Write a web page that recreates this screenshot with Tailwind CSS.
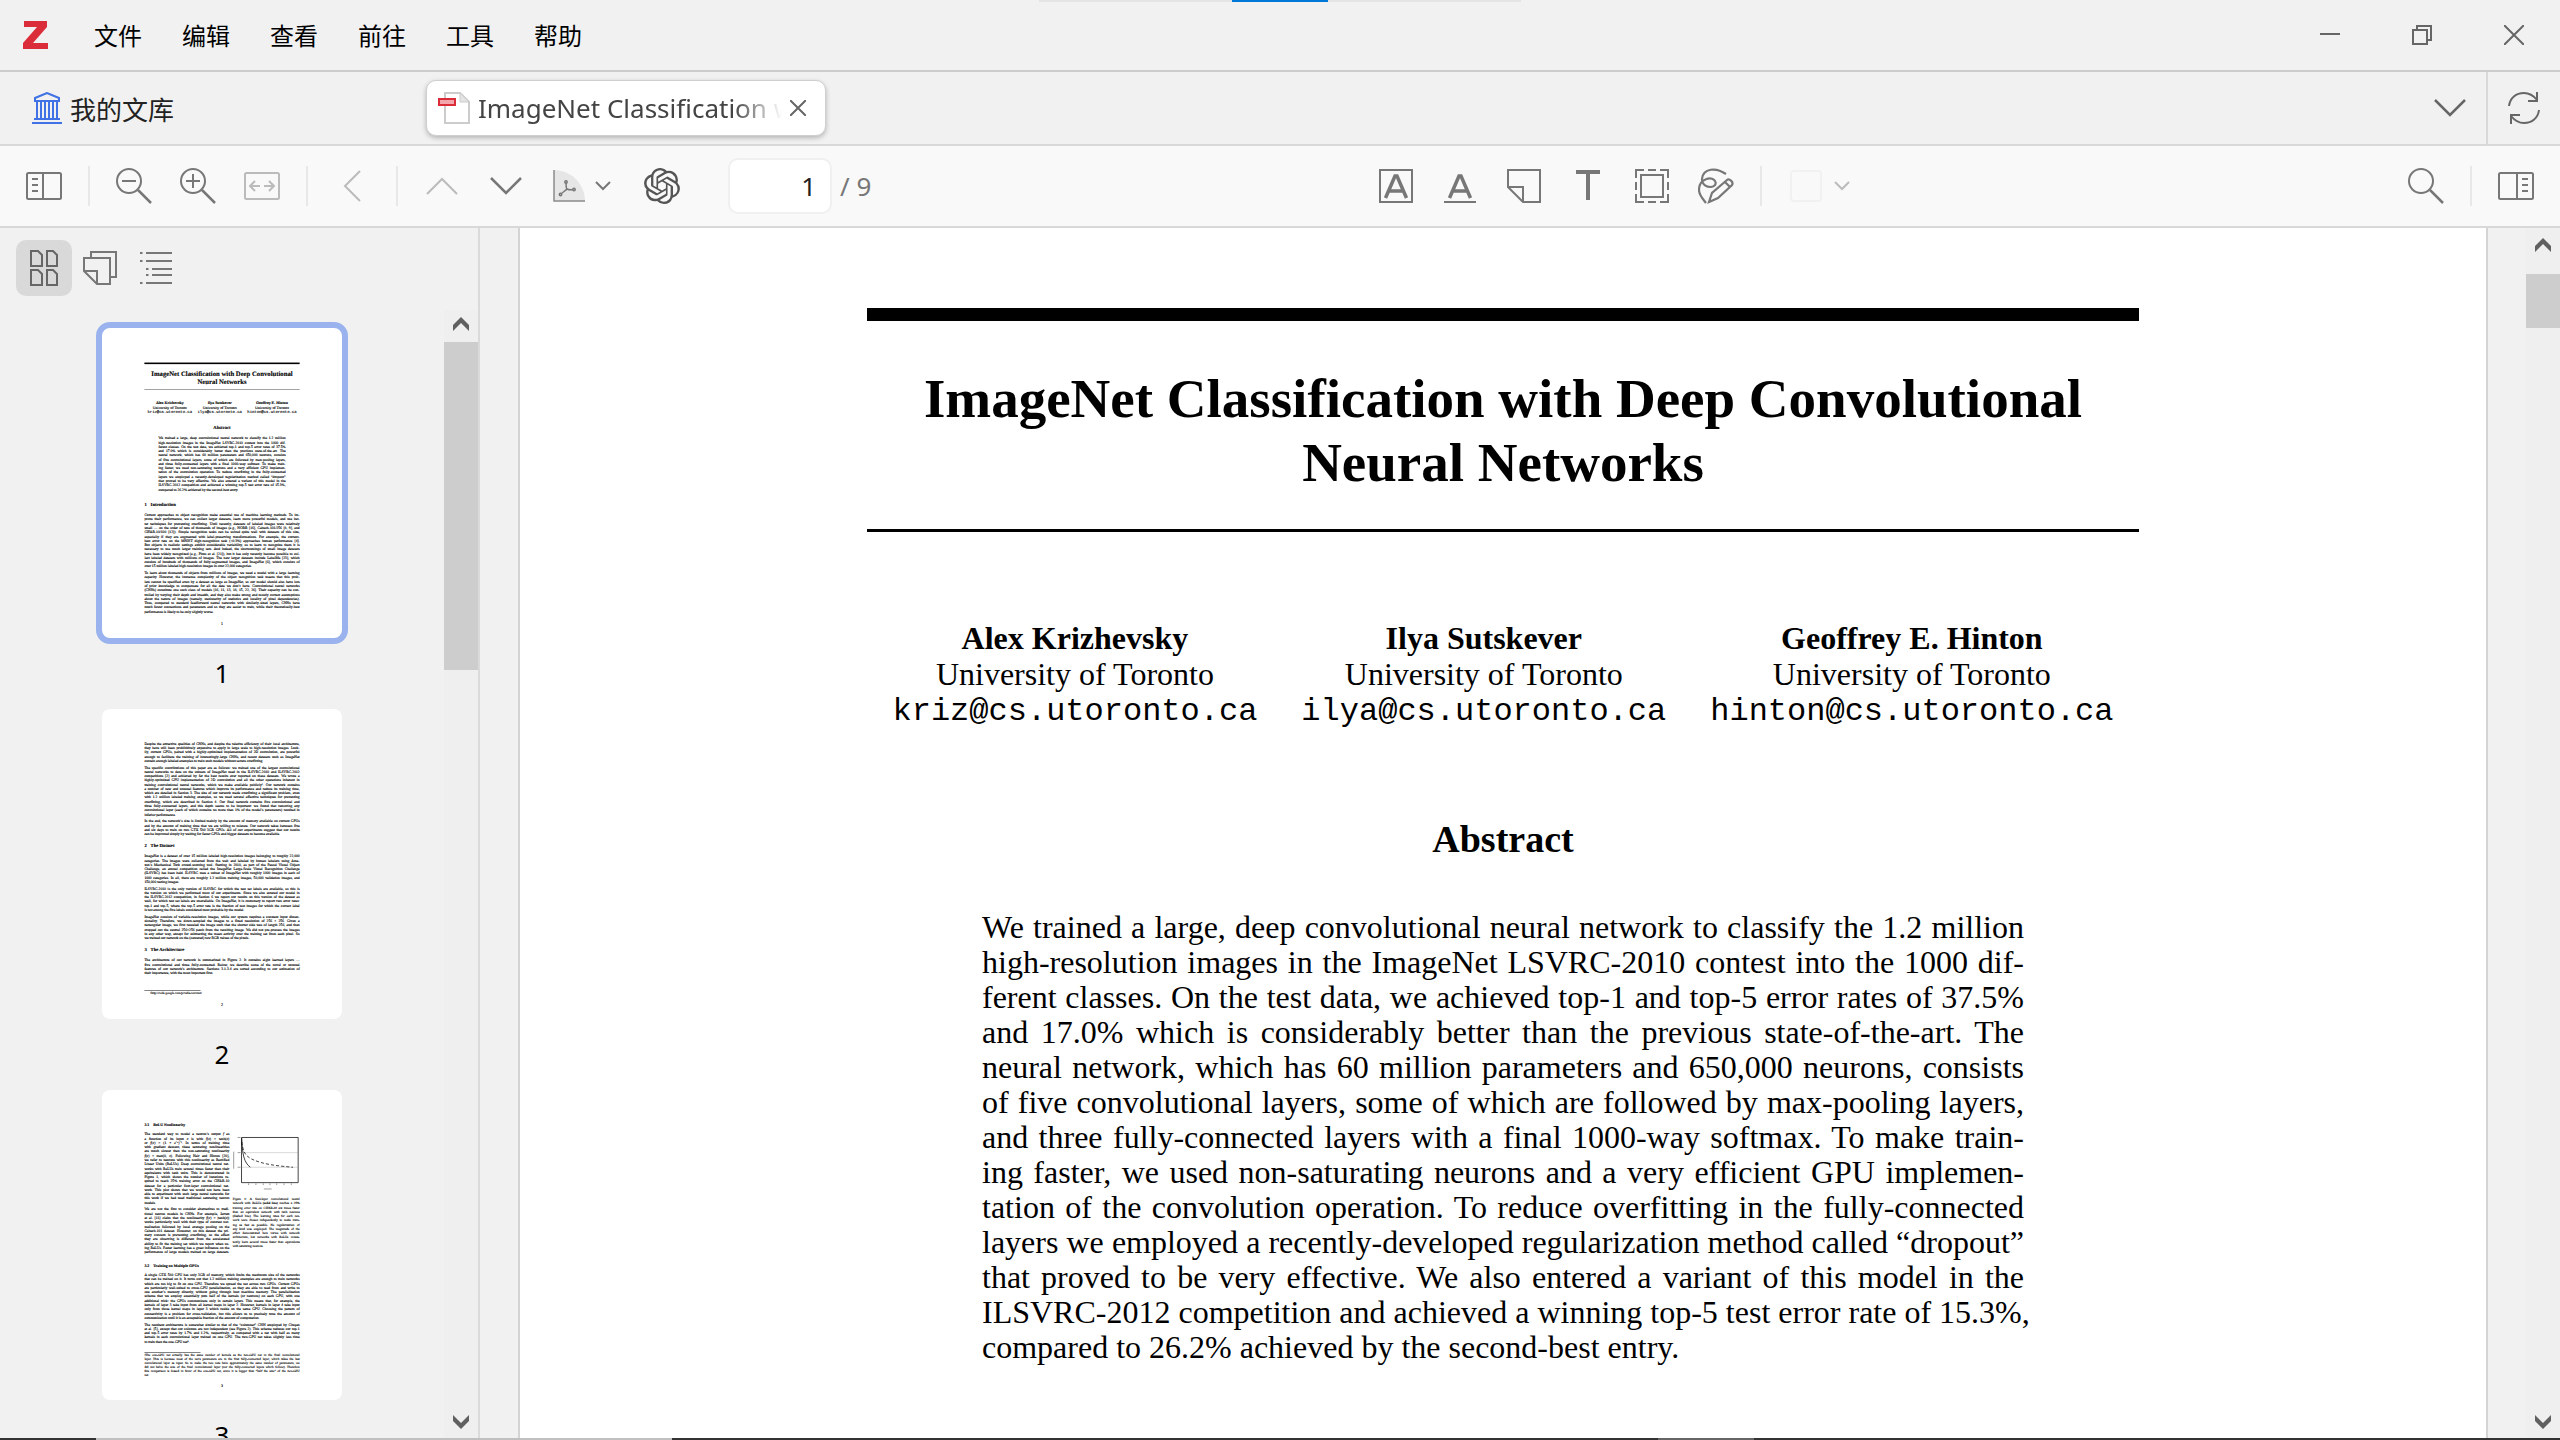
<!DOCTYPE html>
<html lang="zh-CN">
<head>
<meta charset="utf-8">
<title>ImageNet Classification - Zotero</title>
<script src="https://cdn.jsdelivr.net/npm/@tailwindcss/browser@4"></script>
</head>
<body class="relative flex h-screen flex-col overflow-hidden bg-[#f1f1f1] font-['Noto_Sans','Noto_Sans_CJK_SC',sans-serif] text-[#222]">

<!-- Screen-share handle at the top edge -->
<div class="absolute left-1/2 top-0 flex h-0.5 w-[482px] -translate-x-1/2 justify-center bg-[#e4e4e4]"><div class="w-24 bg-[#0078d7]"></div></div>

<!-- Title bar -->
<header class="flex h-[72px] shrink-0 items-center border-b-2 border-[#cccccc]">
  <svg class="ml-[23px] h-7 w-[25px]" viewBox="0 0 25 28" aria-label="Zotero"><path d="M1 0h23v6L10 22h15v6H0v-6L14 6H1z" fill="#db2c3a"/></svg>
  <nav class="ml-[46px] flex gap-10 font-['Noto_Sans_CJK_SC',sans-serif] text-2xl text-black">
    <button>文件</button><button>编辑</button><button>查看</button><button>前往</button><button>工具</button><button>帮助</button>
  </nav>
  <div class="ml-auto flex h-full text-[#666]">
    <button class="grid w-[92px] place-items-center" aria-label="最小化"><svg class="size-5" viewBox="0 0 20 20"><path d="M0 9h20" stroke="currentColor" stroke-width="2"/></svg></button>
    <button class="grid w-[92px] place-items-center" aria-label="还原"><svg class="size-5" viewBox="0 0 20 20" fill="none" stroke="currentColor" stroke-width="2"><path d="M1 5h14v14H1z M5 5V1h14v14h-4"/></svg></button>
    <button class="grid w-[92px] place-items-center" aria-label="关闭"><svg class="size-5" viewBox="0 0 20 20"><path d="M0 0l20 20M20 0L0 20" stroke="currentColor" stroke-width="2"/></svg></button>
  </div>
</header>

<!-- Tab bar -->
<div class="flex h-[74px] shrink-0 items-center border-b-2 border-[#d8d8d8]">
  <button class="ml-8 flex w-[394px] items-center gap-2 text-left font-['Noto_Sans_CJK_SC',sans-serif] text-[26px]">
    <svg class="h-8 w-[30px]" viewBox="0 0 30 32" fill="none" stroke="#4072e5" stroke-width="2"><path d="M3 9V6l12-5 12 5v3z M5 9v17M9 9v17M13 9v17M17 9v17M21 9v17M25 9v17M2 27h26M0 31h30"/></svg>
    我的文库
  </button>
  <div class="flex h-14 w-[400px] items-center rounded-[10px] border border-[#cfcfcf] bg-white pl-[11px] shadow-[0_2px_5px_rgba(0,0,0,0.25)]">
    <svg class="size-8 shrink-0" viewBox="0 0 32 32" fill="none"><path d="M7 1h15l9 9v21H7z" fill="#fff" stroke="#ccc" stroke-width="2"/><path d="M22 1v9h9z" fill="#e4e4e4" stroke="#ccc" stroke-width="1"/><path d="M1 7h16v6H1z" fill="#f4a6ad" stroke="#db2c3a" stroke-width="2"/></svg>
    <span class="ml-2 w-[304px] overflow-hidden whitespace-nowrap text-[26px] text-[#444] [mask-image:linear-gradient(to_right,black_84%,transparent)]">ImageNet Classification with Deep</span>
    <button class="ml-2 text-[#666]" aria-label="关闭标签页"><svg class="size-4" viewBox="0 0 16 16"><path d="M0 0l16 16M16 0L0 16" stroke="currentColor" stroke-width="2"/></svg></button>
  </div>
  <button class="ml-auto mr-5 text-[#666]" aria-label="所有标签页"><svg class="h-[18px] w-8" viewBox="0 0 32 18" fill="none"><path d="M1 1l15 15L31 1" stroke="currentColor" stroke-width="2.5"/></svg></button>
  <div class="flex h-full w-[74px] items-center justify-center border-l-2 border-[#d8d8d8]">
    <button class="text-[#666]" aria-label="同步"><svg class="size-8" viewBox="0 0 32 32" fill="none" stroke="currentColor" stroke-width="2"><path d="M1 14C2 6 8 1 16 1c5 0 9 2 13 7M29 0v9H20M31 18c-1 8-7 13-15 13-5 0-9-2-13-7M3 32v-9h9"/></svg></button>
  </div>
</div>

<!-- Reader toolbar -->
<div class="flex h-[82px] shrink-0 items-center justify-between border-b-2 border-[#d8d8d8] bg-[#f9f9f9] text-[#777]">
  <div class="flex items-center pl-3">
    <button class="grid size-16 place-items-center" aria-label="侧边栏"><svg class="h-7 w-9" viewBox="0 0 36 28" fill="none" stroke="currentColor" stroke-width="2"><rect x="1" y="1" width="34" height="26" rx="1.5"/><path d="M17 1v26M6 7h6M6 13h6M6 19h6"/></svg></button>
    <span class="mx-3 h-10 w-0.5 bg-[#e8e8e8]"></span>
    <button class="grid size-16 place-items-center" aria-label="缩小"><svg class="size-9" viewBox="0 0 36 36" fill="none" stroke="currentColor" stroke-width="2"><circle cx="13" cy="13" r="12"/><path d="M22 22l13 13" stroke-width="2.5"/><path d="M6 13h14"/></svg></button>
    <button class="grid size-16 place-items-center" aria-label="放大"><svg class="size-9" viewBox="0 0 36 36" fill="none" stroke="currentColor" stroke-width="2"><circle cx="13" cy="13" r="12"/><path d="M22 22l13 13" stroke-width="2.5"/><path d="M6 13h14M13 6v14"/></svg></button>
    <button class="grid size-16 place-items-center text-[#bbb]" aria-label="适合宽度"><svg class="h-7 w-9" viewBox="0 0 36 28" fill="none" stroke="currentColor" stroke-width="2"><rect x="1" y="1" width="34" height="26" rx="1.5"/><path d="M16 14H6M11 9l-5 5 5 5M20 14h10M25 9l5 5-5 5"/></svg></button>
    <span class="mx-3 h-10 w-0.5 bg-[#e8e8e8]"></span>
    <button class="grid size-16 place-items-center text-[#bbb]" aria-label="后退"><svg class="h-8 w-[18px]" viewBox="0 0 18 32" fill="none"><path d="M17 1L2 16l15 15" stroke="currentColor" stroke-width="2"/></svg></button>
    <span class="mx-3 h-10 w-0.5 bg-[#e8e8e8]"></span>
    <button class="grid size-16 place-items-center text-[#bbb]" aria-label="上一页"><svg class="h-[18px] w-8" viewBox="0 0 32 18" fill="none"><path d="M1 17L16 2l15 15" stroke="currentColor" stroke-width="2"/></svg></button>
    <button class="grid size-16 place-items-center" aria-label="下一页"><svg class="h-[18px] w-8" viewBox="0 0 32 18" fill="none"><path d="M1 1l15 15L31 1" stroke="currentColor" stroke-width="2.5"/></svg></button>
    <button class="flex h-16 w-[88px] items-center justify-center gap-2.5" aria-label="PDF"><svg class="size-8" viewBox="0 0 32 32" fill="none"><path d="M1 0c17 0 31 14 31 31H1z" fill="#e6e6e6"/><path d="M1 0v31h31" stroke="#8a8a8a" stroke-width="1.5"/><g stroke="#777" stroke-width="1.5" stroke-linejoin="round"><path d="M13 13c0 4 0 5 1 7M14 19c-2 2-4 3-6 5M14 19c2 1 4 1 6 .5"/><circle cx="13" cy="12" r="1.200"/><circle cx="7.500" cy="24.500" r="1.200"/><circle cx="21" cy="19.500" r="1.200"/></g></svg><svg class="h-2.5 w-4" viewBox="0 0 16 10" fill="none"><path d="M1 1l7 7 7-7" stroke="currentColor" stroke-width="2"/></svg></button>
    <button class="ml-1 grid size-16 place-items-center text-[#555]" aria-label="GPT"><svg class="size-9" viewBox="0 0 24 24" fill="currentColor"><path d="M22.2819 9.8211a5.9847 5.9847 0 0 0-.5157-4.9108 6.0462 6.0462 0 0 0-6.5098-2.9A6.0651 6.0651 0 0 0 4.9807 4.1818a5.9847 5.9847 0 0 0-3.9977 2.9 6.0462 6.0462 0 0 0 .7427 7.0966 5.98 5.98 0 0 0 .511 4.9107 6.051 6.051 0 0 0 6.5146 2.9001A5.9847 5.9847 0 0 0 13.2599 24a6.0557 6.0557 0 0 0 5.7718-4.2058 5.9894 5.9894 0 0 0 3.9977-2.9001 6.0557 6.0557 0 0 0-.7475-7.0729zm-9.022 12.6081a4.4755 4.4755 0 0 1-2.8764-1.0408l.1419-.0804 4.7783-2.7582a.7948.7948 0 0 0 .3927-.6813v-6.7369l2.02 1.1686a.071.071 0 0 1 .038.052v5.5826a4.504 4.504 0 0 1-4.4945 4.4944zm-9.6607-4.1254a4.4708 4.4708 0 0 1-.5346-3.0137l.142.0852 4.783 2.7582a.7712.7712 0 0 0 .7806 0l5.8428-3.3685v2.3324a.0804.0804 0 0 1-.0332.0615L9.74 19.9502a4.4992 4.4992 0 0 1-6.1408-1.6464zM2.3408 7.8956a4.485 4.485 0 0 1 2.3655-1.9728V11.6a.7664.7664 0 0 0 .3879.6765l5.8144 3.3543-2.0201 1.1685a.0757.0757 0 0 1-.071 0l-4.8303-2.7865A4.504 4.504 0 0 1 2.3408 7.872zm16.5963 3.8558L13.1038 8.364 15.1192 7.2a.0757.0757 0 0 1 .071 0l4.8303 2.7913a4.4944 4.4944 0 0 1-.6765 8.1042v-5.6772a.79.79 0 0 0-.407-.667zm2.0107-3.0231l-.142-.0852-4.7735-2.7818a.7759.7759 0 0 0-.7854 0L9.409 9.2297V6.8974a.0662.0662 0 0 1 .0284-.0615l4.8303-2.7866a4.4992 4.4992 0 0 1 6.6802 4.66zM8.3065 12.863l-2.02-1.1638a.0804.0804 0 0 1-.038-.0567V6.0742a4.4992 4.4992 0 0 1 7.3757-3.4537l-.142.0805L8.704 5.459a.7948.7948 0 0 0-.3927.6813zm1.0976-2.3654l2.602-1.4998 2.6069 1.4998v2.9994l-2.5974 1.4997-2.6067-1.4997Z"/></svg></button>
    <input class="ml-[34px] h-14 w-[104px] rounded-[10px] border-2 border-[#f0f0f0] bg-white pr-3.5 text-right text-[26px] text-[#222]" value="1" aria-label="页码">
    <span class="ml-2 text-[26px]">/ 9</span>
  </div>

  <div class="flex items-center pr-[52px]">
    <button class="grid size-16 place-items-center" aria-label="高亮"><svg class="size-[34px]" viewBox="0 0 34 34" fill="none" stroke="currentColor"><rect x="1" y="1" width="32" height="32" stroke-width="2"/><path d="M6.500 29L16 7h2l9.500 22M10 22h14" stroke-width="3.500"/></svg></button>
    <button class="grid size-16 place-items-center" aria-label="下划线"><svg class="size-[34px]" viewBox="0 0 34 34" fill="none" stroke="currentColor"><path d="M1 33h32" stroke-width="2"/><path d="M6.500 29L16 7h2l9.500 22M10 22h14" stroke-width="3.500"/></svg></button>
    <button class="grid size-16 place-items-center" aria-label="便笺"><svg class="size-[34px]" viewBox="0 0 34 34" fill="none" stroke="currentColor" stroke-width="2"><path d="M1 1h32v32H16L1 18zM1 18h15v15"/></svg></button>
    <button class="grid size-16 place-items-center" aria-label="文本"><svg class="size-[34px]" viewBox="0 0 34 34" fill="none" stroke="currentColor" stroke-width="4"><path d="M5 3h24M17 3v28"/></svg></button>
    <button class="grid size-16 place-items-center" aria-label="选择区域"><svg class="size-[34px]" viewBox="0 0 34 34" fill="none" stroke="currentColor" stroke-width="2"><rect x="6" y="6" width="22" height="22"/><path d="M1 9V1h8M13 1h8M25 1h8v8M33 13v8M33 25v8h-8M21 33h-8M9 33H1v-8M1 21v-8"/></svg></button>
    <button class="grid size-16 place-items-center" aria-label="绘制"><svg class="size-9" viewBox="0 0 36 36" fill="none" stroke="currentColor" stroke-width="2.200"><path d="M28 6C18-1 5 0 4 11c0 6 5 8 9 8 4-.5 5-3 4.500-5-1-3-5-4.500-9-3C3 13 1 17 1 22c0 5 3 8 7 13"/><path d="M11 34l3-9 15-13c2-2 7 2 5 5L20 30zM27 14l5 5"/></svg></button>
    <span class="mx-3 h-10 w-0.5 bg-[#e8e8e8]"></span>
    <button class="ml-4 flex items-center gap-3 text-[#bbb]" aria-label="颜色"><span class="size-8 rounded border-2 border-[#f1f1f1]"></span><svg class="h-2.5 w-4" viewBox="0 0 16 10" fill="none"><path d="M1 1l7 7 7-7" stroke="currentColor" stroke-width="2"/></svg></button>
  </div>

  <div class="flex items-center pr-3">
    <button class="grid size-16 place-items-center" aria-label="查找"><svg class="size-9" viewBox="0 0 36 36" fill="none" stroke="currentColor" stroke-width="2"><circle cx="13" cy="13" r="12"/><path d="M22 22l13 13" stroke-width="2.500"/></svg></button>
    <span class="mx-3 h-10 w-0.5 bg-[#e8e8e8]"></span>
    <button class="grid size-16 place-items-center" aria-label="信息面板"><svg class="h-7 w-9" viewBox="0 0 36 28" fill="none" stroke="currentColor" stroke-width="2"><rect x="1" y="1" width="34" height="26" rx="1.500"/><path d="M19 1v26M24 7h6M24 13h6M24 19h6"/></svg></button>
  </div>
</div>

<div class="flex min-h-0 flex-1">
  <!-- Sidebar -->
  <aside class="flex w-[480px] shrink-0 flex-col border-r-2 border-[#dadada]">
    <div class="flex h-[82px] shrink-0 pl-4 pt-3 text-[#777]">
      <button class="grid size-14 place-items-center rounded-[10px] bg-[#d9d9d9] text-[#666]" aria-label="缩略图"><svg class="h-9 w-7" viewBox="0 0 28 36" fill="none" stroke="currentColor" stroke-width="2"><path d="M1 1h7l4 4v11H1zM17 1h6l4 4v11H17zM1 20h7l4 4v11H1zM17 20h6l4 4v11H17z"/></svg></button>
      <button class="grid size-14 place-items-center" aria-label="注释"><svg class="size-[34px]" viewBox="0 0 34 34" fill="none" stroke="currentColor" stroke-width="2"><path d="M8 7V1h25v25h-6M1 7h26v26H14L1 20zM1 20h13v13"/></svg></button>
      <button class="grid size-14 place-items-center" aria-label="大纲"><svg class="size-8" viewBox="0 0 32 32" fill="none" stroke="currentColor" stroke-width="2"><path d="M0 1h2.500M6 1h26M0 9h2.500M6 9h26M6 17h2.500M12 17h20M6 23h2.500M12 23h20M0 31h2.500M6 31h26"/></svg></button>
    </div>
    <div class="flex min-h-0 flex-1">
      <div class="flex flex-1 flex-col items-center overflow-hidden pt-3 text-[26px] leading-[71px] text-black">

        <!-- Thumbnails: full-size pages drawn into a small view box -->
        <button class="-mb-1.5 shrink-0 rounded-[14px] border-6 border-[#9ab3ee] bg-white">
          <svg class="h-[310px] w-60" viewBox="0 0 1966 2540"><foreignObject width="1966" height="2540">
            <div class="flex h-full flex-col px-[347px] pb-24 pt-[283px] text-left font-['Liberation_Serif',serif] text-[32px] leading-[35px] text-black [-webkit-text-stroke:1px_black] [text-rendering:geometricPrecision] [&_h3]:mb-[47px] [&_h3]:flex [&_h3]:gap-8 [&_h3]:text-[38px] [&_h3]:font-bold [&_h3]:leading-10 [&>p]:mb-[20px] [&_p]:whitespace-pre-line [&_p]:text-[30px] [&_p]:[text-align-last:justify] [&_p>span]:block [&_p>span:last-child]:[text-align-last:left]">
              <div id="front-copy"></div>
              <h3 class="mt-[88px]"><span>1</span><span>Introduction</span></h3>
              <p>Current approaches to object recognition make essential use of machine learning methods. To im-
prove their performance, we can collect larger datasets, learn more powerful models, and use bet-
ter techniques for preventing overfitting. Until recently, datasets of labeled images were relatively
small — on the order of tens of thousands of images (e.g., NORB [16], Caltech-101/256 [8, 9], and
CIFAR-10/100 [12]). Simple recognition tasks can be solved quite well with datasets of this size,
especially if they are augmented with label-preserving transformations. For example, the current-
best error rate on the MNIST digit-recognition task (&lt;0.3%) approaches human performance [4].
But objects in realistic settings exhibit considerable variability, so to learn to recognize them it is
necessary to use much larger training sets. And indeed, the shortcomings of small image datasets
have been widely recognized (e.g., Pinto et al. [21]), but it has only recently become possible to col-
lect labeled datasets with millions of images. The new larger datasets include LabelMe [23], which
consists of hundreds of thousands of fully-segmented images, and ImageNet [6], which consists of<span>over 15 million labeled high-resolution images in over 22,000 categories.</span></p>
              <p>To learn about thousands of objects from millions of images, we need a model with a large learning
capacity. However, the immense complexity of the object recognition task means that this prob-
lem cannot be specified even by a dataset as large as ImageNet, so our model should also have lots
of prior knowledge to compensate for all the data we don’t have. Convolutional neural networks
(CNNs) constitute one such class of models [16, 11, 13, 18, 15, 22, 26]. Their capacity can be con-
trolled by varying their depth and breadth, and they also make strong and mostly correct assumptions
about the nature of images (namely, stationarity of statistics and locality of pixel dependencies).
Thus, compared to standard feedforward neural networks with similarly-sized layers, CNNs have
much fewer connections and parameters and so they are easier to train, while their theoretically-best<span>performance is likely to be only slightly worse.</span></p>
              <div class="mt-auto text-center">1</div>
            </div>
          </foreignObject></svg>
        </button>
        <span class="shrink-0">1</span>

        <button class="shrink-0 rounded-lg bg-white">
          <svg class="h-[310px] w-60" viewBox="0 0 1966 2540"><foreignObject width="1966" height="2540">
            <div class="flex h-full flex-col px-[347px] pb-24 pt-[266px] text-left font-['Liberation_Serif',serif] text-[32px] leading-[35px] text-black [-webkit-text-stroke:1px_black] [text-rendering:geometricPrecision] [&_h3]:mb-[47px] [&_h3]:mt-[40px] [&_h3]:flex [&_h3]:gap-8 [&_h3]:text-[38px] [&_h3]:font-bold [&_h3]:leading-10 [&>p]:mb-[20px] [&_p]:whitespace-pre-line [&_p]:text-[30px] [&_p]:[text-align-last:justify] [&_p>span]:block [&_p>span:last-child]:[text-align-last:left]">
              <p>Despite the attractive qualities of CNNs, and despite the relative efficiency of their local architecture,
they have still been prohibitively expensive to apply in large scale to high-resolution images. Luck-
ily, current GPUs, paired with a highly-optimized implementation of 2D convolution, are powerful
enough to facilitate the training of interestingly-large CNNs, and recent datasets such as ImageNet<span>contain enough labeled examples to train such models without severe overfitting.</span></p>
              <p>The specific contributions of this paper are as follows: we trained one of the largest convolutional
neural networks to date on the subsets of ImageNet used in the ILSVRC-2010 and ILSVRC-2012
competitions [2] and achieved by far the best results ever reported on these datasets. We wrote a
highly-optimized GPU implementation of 2D convolution and all the other operations inherent in
training convolutional neural networks, which we make available publicly¹. Our network contains
a number of new and unusual features which improve its performance and reduce its training time,
which are detailed in Section 3. The size of our network made overfitting a significant problem, even
with 1.2 million labeled training examples, so we used several effective techniques for preventing
overfitting, which are described in Section 4. Our final network contains five convolutional and
three fully-connected layers, and this depth seems to be important: we found that removing any
convolutional layer (each of which contains no more than 1% of the model’s parameters) resulted in<span>inferior performance.</span></p>
              <p>In the end, the network’s size is limited mainly by the amount of memory available on current GPUs
and by the amount of training time that we are willing to tolerate. Our network takes between five
and six days to train on two GTX 580 3GB GPUs. All of our experiments suggest that our results<span>can be improved simply by waiting for faster GPUs and bigger datasets to become available.</span></p>
              <h3><span>2</span><span>The Dataset</span></h3>
              <p>ImageNet is a dataset of over 15 million labeled high-resolution images belonging to roughly 22,000
categories. The images were collected from the web and labeled by human labelers using Ama-
zon’s Mechanical Turk crowd-sourcing tool. Starting in 2010, as part of the Pascal Visual Object
Challenge, an annual competition called the ImageNet Large-Scale Visual Recognition Challenge
(ILSVRC) has been held. ILSVRC uses a subset of ImageNet with roughly 1000 images in each of
1000 categories. In all, there are roughly 1.2 million training images, 50,000 validation images, and<span>150,000 testing images.</span></p>
              <p>ILSVRC-2010 is the only version of ILSVRC for which the test set labels are available, so this is
the version on which we performed most of our experiments. Since we also entered our model in
the ILSVRC-2012 competition, in Section 6 we report our results on this version of the dataset as
well, for which test set labels are unavailable. On ImageNet, it is customary to report two error rates:
top-1 and top-5, where the top-5 error rate is the fraction of test images for which the correct label<span>is not among the five labels considered most probable by the model.</span></p>
              <p>ImageNet consists of variable-resolution images, while our system requires a constant input dimen-
sionality. Therefore, we down-sampled the images to a fixed resolution of 256 × 256. Given a
rectangular image, we first rescaled the image such that the shorter side was of length 256, and then
cropped out the central 256×256 patch from the resulting image. We did not pre-process the images
in any other way, except for subtracting the mean activity over the training set from each pixel. So<span>we trained our network on the (centered) raw RGB values of the pixels.</span></p>
              <h3><span>3</span><span>The Architecture</span></h3>
              <p>The architecture of our network is summarized in Figure 2. It contains eight learned layers —
five convolutional and three fully-connected. Below, we describe some of the novel or unusual
features of our network’s architecture. Sections 3.1-3.4 are sorted according to our estimation of<span>their importance, with the most important first.</span></p>
              <div class="mt-auto w-[460px] whitespace-nowrap border-t-4 border-black pl-12 pt-1.5 text-[26px] leading-8">¹http://code.google.com/p/cuda-convnet/</div>
              <div class="mt-16 text-center">2</div>
            </div>
          </foreignObject></svg>
        </button>
        <span class="shrink-0">2</span>

        <button class="shrink-0 rounded-lg bg-white">
          <svg class="h-[310px] w-60" viewBox="0 0 1966 2540"><foreignObject width="1966" height="2540">
            <div class="flex h-full flex-col px-[347px] pb-24 pt-[266px] text-left font-['Liberation_Serif',serif] text-[32px] leading-[35px] text-black [-webkit-text-stroke:1px_black] [text-rendering:geometricPrecision] [&_h4]:mb-[44px] [&_h4]:flex [&_h4]:gap-8 [&_h4]:font-bold [&_p]:mb-[20px] [&_p]:whitespace-pre-line [&_p]:text-[30px] [&_p]:[text-align-last:justify] [&_p>span]:block [&_p>span:last-child]:[text-align-last:left]">
              <h4><span>3.1</span><span>ReLU Nonlinearity</span></h4>
              <div class="flex justify-between">
                <div class="w-[696px]">
                  <p>The standard way to model a neuron’s output <i>f</i> as
a function of its input <i>x</i> is with <i>f</i>(<i>x</i>) = tanh(<i>x</i>)
or <i>f</i>(<i>x</i>) = (1 + <i>e</i>⁻ˣ)⁻¹. In terms of training time
with gradient descent, these saturating nonlinearities
are much slower than the non-saturating nonlinearity
<i>f</i>(<i>x</i>) = max(0, <i>x</i>). Following Nair and Hinton [20],
we refer to neurons with this nonlinearity as Rectified
Linear Units (ReLUs). Deep convolutional neural net-
works with ReLUs train several times faster than their
equivalents with tanh units. This is demonstrated in
Figure 1, which shows the number of iterations re-
quired to reach 25% training error on the CIFAR-10
dataset for a particular four-layer convolutional net-
work. This plot shows that we would not have been
able to experiment with such large neural networks for
this work if we had used traditional saturating neuron<span>models.</span></p>
                  <p>We are not the first to consider alternatives to tradi-
tional neuron models in CNNs. For example, Jarrett
et al. [11] claim that the nonlinearity <i>f</i>(<i>x</i>) = |tanh(<i>x</i>)|
works particularly well with their type of contrast nor-
malization followed by local average pooling on the
Caltech-101 dataset. However, on this dataset the pri-
mary concern is preventing overfitting, so the effect
they are observing is different from the accelerated
ability to fit the training set which we report when us-
ing ReLUs. Faster learning has a great influence on the
performance of large models trained on large datasets.</p>
                </div>
                <div class="w-[548px] pt-5 [&_p]:text-[26px]!">
                  <svg class="mb-5 h-[490px] w-[548px]" viewBox="0 0 548 490" fill="none" stroke="#000" stroke-width="6"><path d="M72 24h464v370H72z"/><path d="M72 148h464M72 268h464" stroke="#999" stroke-width="3"/><path d="M74 30c4 130 18 200 70 238"/><path d="M74 60c10 70 20 110 80 140 90 45 220 58 340 68" stroke-dasharray="26 16"/><path d="M40 24h24M40 148h24M40 268h24M130 400v14M190 400v14M250 400v14M305 400v14M360 400v14M420 400v14M480 400v14M8 140v140M255 446h64" stroke="#777"/></svg>
                  <p>Figure 1: A four-layer convolutional neural
network with ReLUs (<b>solid line</b>) reaches a 25%
training error rate on CIFAR-10 six times faster
than an equivalent network with tanh neurons
(dashed line). The learning rates for each net-
work were chosen independently to make train-
ing as fast as possible. No regularization of
any kind was employed. The magnitude of the
effect demonstrated here varies with network
architecture, but networks with ReLUs consis-
tently learn several times faster than equivalents<span>with saturating neurons.</span></p>
                </div>
              </div>
              <h4 class="mt-[54px]"><span>3.2</span><span>Training on Multiple GPUs</span></h4>
              <p>A single GTX 580 GPU has only 3GB of memory, which limits the maximum size of the networks
that can be trained on it. It turns out that 1.2 million training examples are enough to train networks
which are too big to fit on one GPU. Therefore we spread the net across two GPUs. Current GPUs
are particularly well-suited to cross-GPU parallelization, as they are able to read from and write to
one another’s memory directly, without going through host machine memory. The parallelization
scheme that we employ essentially puts half of the kernels (or neurons) on each GPU, with one
additional trick: the GPUs communicate only in certain layers. This means that, for example, the
kernels of layer 3 take input from all kernel maps in layer 2. However, kernels in layer 4 take input
only from those kernel maps in layer 3 which reside on the same GPU. Choosing the pattern of
connectivity is a problem for cross-validation, but this allows us to precisely tune the amount of<span>communication until it is an acceptable fraction of the amount of computation.</span></p>
              <p>The resultant architecture is somewhat similar to that of the “columnar” CNN employed by Cireşan
et al. [5], except that our columns are not independent (see Figure 2). This scheme reduces our top-1
and top-5 error rates by 1.7% and 1.2%, respectively, as compared with a net with half as many
kernels in each convolutional layer trained on one GPU. The two-GPU net takes slightly less time<span>to train than the one-GPU net².</span></p>
              <div class="mt-auto w-[460px] border-t-4 border-black"></div>
              <div class="pt-1.5 leading-8 [&_p]:text-[26px]!"><p>²The one-GPU net actually has the same number of kernels as the two-GPU net in the final convolutional
layer. This is because most of the net’s parameters are in the first fully-connected layer, which takes the last
convolutional layer as input. So to make the two nets have approximately the same number of parameters, we
did not halve the size of the final convolutional layer (nor the fully-connected layers which follow). Therefore
this comparison is biased in favor of the one-GPU net, since it is bigger than “half the size” of the two-GPU<span>net.</span></p></div>
              <div class="mt-10 text-center">3</div>
            </div>
          </foreignObject></svg>
        </button>
        <span class="shrink-0">3</span>
      </div>
      <div class="flex w-[34px] shrink-0 flex-col items-center bg-[#efefef] text-[#606060]">
        <button class="grid h-8 w-full shrink-0 place-items-center pb-1" aria-label="向上滚动"><svg class="h-3.5 w-4" viewBox="0 0 16 14"><path d="M8 0l8 8v6L8 6l-8 8V8z" fill="currentColor"/></svg></button>
        <div class="h-[328px] w-full bg-[#cdcdcd]"></div>
        <button class="mt-auto grid h-8 w-full place-items-center" aria-label="向下滚动"><svg class="h-3.5 w-4" viewBox="0 0 16 14"><path d="M8 14l8-8V0L8 8 0 0v6z" fill="currentColor"/></svg></button>
      </div>
    </div>
  </aside>

  <!-- Document view -->
  <main class="flex min-w-0 flex-1">
    <div class="mx-[38px] flex-1 overflow-hidden border-x-2 border-[#d4d4d4] bg-white">
      <div class="mx-auto mt-20 w-[1272px] font-['Liberation_Serif',serif] text-[32px] leading-[35px] text-black [&_p]:whitespace-pre-line [&_p]:[text-align-last:justify] [&_p>span]:block [&_p>span:last-child]:[text-align-last:left]">
        <div id="front">
          <div class="h-[13px] bg-black"></div>
          <h1 class="mt-[46px] text-center text-[55px] font-bold leading-16">ImageNet Classification with Deep Convolutional<br>Neural Networks</h1>
          <div class="mt-[34px] h-[3px] bg-black"></div>
          <div class="mt-[88px] flex justify-center gap-11 text-center leading-9">
            <div><b>Alex Krizhevsky</b><br>University of Toronto<br><span class="block font-['Liberation_Mono',monospace] leading-10">kriz@cs.utoronto.ca</span></div>
            <div><b>Ilya Sutskever</b><br>University of Toronto<br><span class="block font-['Liberation_Mono',monospace] leading-10">ilya@cs.utoronto.ca</span></div>
            <div><b>Geoffrey E. Hinton</b><br>University of Toronto<br><span class="block font-['Liberation_Mono',monospace] leading-10">hinton@cs.utoronto.ca</span></div>
          </div>
          <h2 class="mt-[87px] text-center text-[38px] font-bold leading-10">Abstract</h2>
          <p class="mx-auto mt-[51px] w-[1042px]">We trained a large, deep convolutional neural network to classify the 1.2 million
high-resolution images in the ImageNet LSVRC-2010 contest into the 1000 dif-
ferent classes. On the test data, we achieved top-1 and top-5 error rates of 37.5%
and 17.0% which is considerably better than the previous state-of-the-art. The
neural network, which has 60 million parameters and 650,000 neurons, consists
of five convolutional layers, some of which are followed by max-pooling layers,
and three fully-connected layers with a final 1000-way softmax. To make train-
ing faster, we used non-saturating neurons and a very efficient GPU implemen-
tation of the convolution operation. To reduce overfitting in the fully-connected
layers we employed a recently-developed regularization method called “dropout”
that proved to be very effective. We also entered a variant of this model in the<span class="whitespace-nowrap">ILSVRC-2012 competition and achieved a winning top-5 test error rate of 15.3%,</span><span>compared to 26.2% achieved by the second-best entry.</span></p>
        </div>
      </div>
    </div>
    <div class="flex w-[34px] shrink-0 flex-col items-center bg-[#efefef] text-[#606060]">
      <button class="grid h-[46px] w-full place-items-center pb-3" aria-label="向上滚动"><svg class="h-3.5 w-4" viewBox="0 0 16 14"><path d="M8 0l8 8v6L8 6l-8 8V8z" fill="currentColor"/></svg></button>
      <div class="h-[54px] w-full bg-[#cdcdcd]"></div>
      <button class="mt-auto grid h-8 w-full place-items-center" aria-label="向下滚动"><svg class="h-3.5 w-4" viewBox="0 0 16 14"><path d="M8 14l8-8V0L8 8 0 0v6z" fill="currentColor"/></svg></button>
    </div>
  </main>
</div>

<!-- Edge of the taskbar -->
<div class="flex h-0.5 shrink-0 bg-[#333]"><div class="ml-24 w-[576px] bg-[#c0c0c0]"></div><div class="ml-[986px] w-24 bg-[#666]"></div></div>

<script>
  // The first thumbnail shows the same front matter as the open page.
  document.getElementById('front-copy').innerHTML = document.getElementById('front').innerHTML;
</script>
</body>
</html>
